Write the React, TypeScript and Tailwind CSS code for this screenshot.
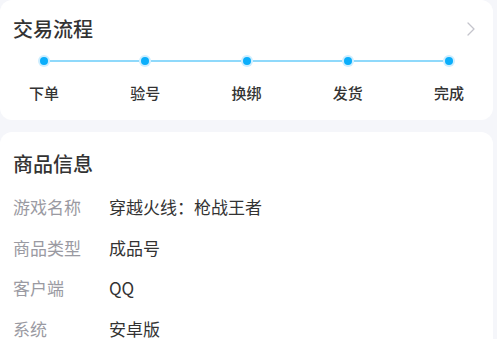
import { ChevronRight } from 'lucide-react';

const steps = ['下单', '验号', '换绑', '发货', '完成'];

const info = [
  { label: '游戏名称', value: '穿越火线：枪战王者' },
  { label: '商品类型', value: '成品号' },
  { label: '客户端', value: 'QQ' },
  { label: '系统', value: '安卓版' },
];

export default function App() {
  return (
    <div
      className="w-[497px] h-[339px] overflow-hidden bg-[#f5f6fa] pr-[4px]"
      style={{ fontFamily: '"Noto Sans CJK SC", "Noto Sans", sans-serif' }}
    >
      {/* 交易流程 */}
      <div className="bg-white rounded-[12px] pt-[15px] pb-[17px] px-[13px]">
        <div className="h-7 flex items-center justify-between">
          <span className="text-[20px] leading-7 font-medium text-[#333333]">交易流程</span>
          <ChevronRight className="w-6 h-6 text-[#c4c4cc] -mr-[3px]" strokeWidth={1.3} />
        </div>

        {/* Dots */}
        <div className="mt-[12px] px-[25px] flex items-center">
          {steps.map((s, i) => (
            <div key={s} className={`flex items-center ${i < steps.length - 1 ? 'flex-1' : ''}`}>
              <span className="w-[12px] h-[12px] rounded-full bg-[#cdeeff] flex items-center justify-center shrink-0">
                <span className="w-[8px] h-[8px] rounded-full bg-[#0aaefb]" />
              </span>
              {i < steps.length - 1 && <span className="flex-1 h-[2px] bg-[#8fd9fb]" />}
            </div>
          ))}
        </div>

        {/* Labels */}
        <div className="mt-[16px] flex justify-between">
          {steps.map((s) => (
            <span key={s} className="w-[62px] text-center text-[15px] leading-5 font-medium text-[#333333]">
              {s}
            </span>
          ))}
        </div>
      </div>

      {/* 商品信息 */}
      <div className="mt-[12px] bg-white rounded-[12px] pt-[18px] px-[13px] pb-4">
        <div className="text-[20px] leading-7 font-medium text-[#333333]">商品信息</div>
        <div className="mt-[9px]">
          {info.map((r) => (
            <div key={r.label} className="h-[40.5px] flex items-center text-[17px] leading-6">
              <span className="w-[96px] text-[#9a9aa2]">{r.label}</span>
              <span className="text-[#333333]">{r.value}</span>
            </div>
          ))}
        </div>
      </div>
    </div>
  );
}
